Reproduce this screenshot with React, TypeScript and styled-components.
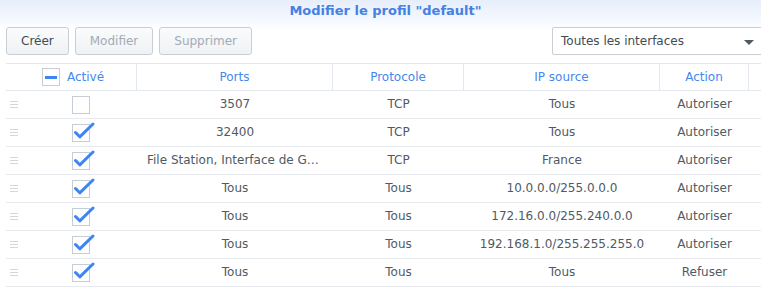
import React from 'react';
import styled, {createGlobalStyle} from "styled-components";

type RuleType = {
    enabled: boolean
    ports: string
    protocol: string
    source: string
    action: string
}

const rules: RuleType[] = [
    {enabled: false, ports: '3507', protocol: 'TCP', source: 'Tous', action: 'Autoriser'},
    {enabled: true, ports: '32400', protocol: 'TCP', source: 'Tous', action: 'Autoriser'},
    {enabled: true, ports: 'File Station, Interface de Gestion, Synology Drive', protocol: 'TCP', source: 'France', action: 'Autoriser'},
    {enabled: true, ports: 'Tous', protocol: 'Tous', source: '10.0.0.0/255.0.0.0', action: 'Autoriser'},
    {enabled: true, ports: 'Tous', protocol: 'Tous', source: '172.16.0.0/255.240.0.0', action: 'Autoriser'},
    {enabled: true, ports: 'Tous', protocol: 'Tous', source: '192.168.1.0/255.255.255.0', action: 'Autoriser'},
    {enabled: true, ports: 'Tous', protocol: 'Tous', source: 'Tous', action: 'Refuser'},
]

const Check = () => (
    <svg width="22" height="20" viewBox="0 0 22 20">
        <path d="M2.5 10.5 L6.8 14.8 L20 2" fill="none" stroke="#3d85f2" strokeWidth="3" strokeLinecap="round" strokeLinejoin="round"/>
    </svg>
)

const App = () => {
    return (
        <Page>
            <GlobalStyle/>
            <TitleBar>Modifier le profil "default"</TitleBar>
            <Toolbar>
                <Button>Créer</Button>
                <Button disabled>Modifier</Button>
                <Button disabled>Supprimer</Button>
                <Select>
                    Toutes les interfaces
                    <Arrow/>
                </Select>
            </Toolbar>
            <Table>
                <HeaderRow>
                    <HeadCell $span={2}>
                        <Box><Dash/></Box>
                        Activé
                    </HeadCell>
                    <HeadCell>Ports</HeadCell>
                    <HeadCell>Protocole</HeadCell>
                    <HeadCell>IP source</HeadCell>
                    <HeadCell>Action</HeadCell>
                    <HeadCell $last/>
                </HeaderRow>
                {rules.map((r, i) => (
                    <Row key={i}>
                        <Handle><span/><span/><span/></Handle>
                        <CheckCell>
                            <Box>{r.enabled && <Check/>}</Box>
                        </CheckCell>
                        <Cell title={r.ports}>{r.ports}</Cell>
                        <Cell>{r.protocol}</Cell>
                        <Cell>{r.source}</Cell>
                        <Cell>{r.action}</Cell>
                        <Cell/>
                    </Row>
                ))}
            </Table>
        </Page>
    );
};

export default App;

const GlobalStyle = createGlobalStyle`
  body {
    margin: 0;
    background: #fff;
    overflow: hidden;
    font-family: "DejaVu Sans", Verdana, sans-serif;
    font-size: 12px;
  }
`

const Page = styled.div`
  width: 761px;
  height: 298px;
  overflow: hidden;
  background: linear-gradient(180deg, #e7eefb 0px, #f3f7fe 18px, #ffffff 30px);
`

const TitleBar = styled.div`
  height: 22px;
  line-height: 22px;
  text-align: center;
  font-size: 13px;
  font-weight: bold;
  color: #4580e3;
  padding-left: 10px;
`

const Toolbar = styled.div`
  display: flex;
  align-items: center;
  gap: 6px;
  padding: 5px 0 0 6px;
  margin-bottom: 8px;
  margin-right: -6px;
`

const Button = styled.button`
  height: 28px;
  padding: 0 14px;
  border: 1px solid #c9ced5;
  border-radius: 3px;
  background: linear-gradient(180deg, #fafbfc, #eff2f5);
  font-family: "DejaVu Sans", Verdana, sans-serif;
  font-size: 12px;
  color: #414b55;
  &:disabled {
    color: #a3abb5;
  }
`

const Select = styled.div`
  position: relative;
  margin-left: auto;
  width: 215px;
  height: 28px;
  box-sizing: border-box;
  border: 1px solid #c9ced5;
  border-radius: 2px;
  background: #fff;
  padding-left: 8px;
  display: flex;
  align-items: center;
  color: #414b55;
`

const Arrow = styled.span`
  position: absolute;
  right: 12px;
  top: 12px;
  width: 0;
  height: 0;
  border-left: 5px solid transparent;
  border-right: 5px solid transparent;
  border-top: 5px solid #505860;
`

const Table = styled.div`
  margin-left: 6px;
  width: 770px;
`

const columns = '18px 113px 196px 131px 196px 89px 27px'

const HeaderRow = styled.div`
  display: grid;
  grid-template-columns: ${columns};
  height: 26px;
  border-top: 1px solid #e3e8ee;
  border-bottom: 1px solid #e3e8ee;
`

const HeadCell = styled.div<{ $span?: number, $last?: boolean }>`
  grid-column: span ${props => props.$span || 1};
  display: flex;
  align-items: center;
  justify-content: center;
  gap: 7px;
  padding-left: ${props => props.$span ? '4px' : '0'};
  color: #4687ee;
  border-right: ${props => props.$last ? 'none' : '1px solid #e3e8ee'};
`

const Row = styled.div`
  display: grid;
  grid-template-columns: ${columns};
  height: 27px;
  border-bottom: 1px solid #e6eaef;
  color: #505a64;
`

const Cell = styled.div`
  padding: 0 10px;
  min-width: 0;
  line-height: 27px;
  text-align: center;
  white-space: nowrap;
  overflow: hidden;
  text-overflow: ellipsis;
`

const CheckCell = styled.div`
  display: flex;
  align-items: center;
  justify-content: center;
`

const Handle = styled.div`
  display: flex;
  flex-direction: column;
  justify-content: center;
  gap: 2px;
  padding-left: 4px;
  & > span {
    display: block;
    width: 8px;
    height: 1px;
    background: #d3d7dc;
  }
`

const Box = styled.div`
  position: relative;
  width: 18px;
  height: 18px;
  box-sizing: border-box;
  border: 1px solid #c6cdd5;
  background: #fff;
  flex-shrink: 0;
  & > svg {
    position: absolute;
    left: 0;
    top: -3px;
  }
`

const Dash = styled.span`
  position: absolute;
  left: 2px;
  top: 7px;
  width: 12px;
  height: 3px;
  background: #3d85f2;
`
